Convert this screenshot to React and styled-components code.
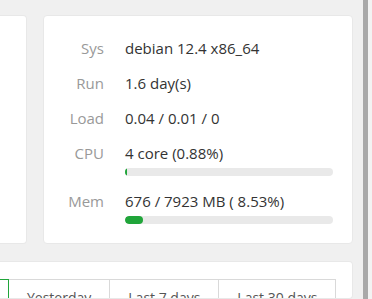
import React from "react";
import styled, { createGlobalStyle } from "styled-components";

const GlobalStyle = createGlobalStyle`
  html, body {
    margin: 0;
    padding: 0;
    background: #f0f0f0;
    overflow: hidden;
  }
  body {
    font-family: "Open Sans", "Noto Sans", sans-serif;
    color: #333;
  }
`;

const Screen = styled.div`
  display: flex;
  width: 372px;
  height: 299px;
  overflow: hidden;
`;

const Main = styled.main`
  flex: 0 0 363px;
  box-sizing: border-box;
  padding: 15px 10px 0 0;
  display: flex;
  flex-direction: column;
  gap: 17px;
`;

const Scrollbar = styled.div`
  flex: 0 0 9px;
  display: flex;
  background: #f3f3f3;
`;

const Thumb = styled.div`
  width: 5px;
  height: 100%;
  background: #a9a9a9;
`;

const Row = styled.div`
  display: flex;
  gap: 16px;
`;

const Card = styled.section`
  box-sizing: border-box;
  background: #fff;
  border: 1px solid #e8e8e8;
  border-radius: 4px;
`;

const SideCard = styled(Card)`
  width: 27px;
  height: 229px;
  border-left: none;
  border-radius: 0 4px 4px 0;
`;

const InfoCard = styled(Card)`
  width: 310px;
  height: 229px;
  padding: 22px 19px 0 0;
  display: flex;
  flex-direction: column;
  gap: 15px;
`;

const InfoRow = styled.div`
  display: grid;
  grid-template-columns: 60px 1fr;
  column-gap: 21px;
  font-size: 15px;
  line-height: 20px;
`;

const Label = styled.span`
  text-align: right;
  color: #999;
`;

const Value = styled.div`
  display: flex;
  flex-direction: column;
  gap: 5px;
  color: #333;
`;

const Track = styled.div`
  height: 8px;
  border-radius: 4px;
  background: #e9e9e9;
  overflow: hidden;
`;

const Fill = styled.div`
  height: 100%;
  border-radius: 4px;
  background: #20a53a;
`;

const ChartCard = styled(Card)`
  width: 353px;
  height: 80px;
  border-left: none;
  border-radius: 0 4px 4px 0;
  padding-top: 17px;
  overflow: hidden;
`;

const Tabs = styled.div`
  display: flex;
`;

const Tab = styled.button`
  flex: 0 0 auto;
  display: flex;
  justify-content: flex-end;
  box-sizing: border-box;
  height: 36px;
  padding: 8px 18px;
  margin-left: -1px;
  background: #fff;
  border: 1px solid ${(p) => (p.$active ? "#20a53a" : "#d9d9d9")};
  position: relative;
  z-index: ${(p) => (p.$active ? 1 : 0)};
  font-family: "Open Sans", "Noto Sans", sans-serif;
  font-size: 14px;
  line-height: 20px;
  color: #555;
  white-space: nowrap;
  overflow: hidden;
  cursor: pointer;
`;

/* first tab is scrolled out of view on the left; only its right edge shows */
const CutTab = styled(Tab)`
  width: 9px;
  padding: 8px 0;
  border-left: none;
  margin-left: 0;

  span {
    flex-shrink: 0;
    margin-right: 18px;
  }
`;

const info = [
  { label: "Sys", value: "debian 12.4 x86_64" },
  { label: "Run", value: "1.6 day(s)" },
  { label: "Load", value: "0.04 / 0.01 / 0" },
  { label: "CPU", value: "4 core (0.88%)", pct: 0.88 },
  { label: "Mem", value: "676 / 7923 MB ( 8.53%)", pct: 8.53 },
];

export default function App() {
  return (
    <>
      <GlobalStyle />
      <Screen>
        <Main>
          <Row>
            <SideCard />
            <InfoCard>
              {info.map((item) => (
                <InfoRow key={item.label}>
                  <Label>{item.label}</Label>
                  <Value>
                    <span>{item.value}</span>
                    {item.pct !== undefined && (
                      <Track>
                        <Fill style={{ width: `${Math.max(item.pct, 1)}%` }} />
                      </Track>
                    )}
                  </Value>
                </InfoRow>
              ))}
            </InfoCard>
          </Row>
          <ChartCard>
            <Tabs>
              <CutTab $active>
                <span>Today</span>
              </CutTab>
              <Tab>Yesterday</Tab>
              <Tab>Last 7 days</Tab>
              <Tab>Last 30 days</Tab>
            </Tabs>
          </ChartCard>
        </Main>
        <Scrollbar>
          <Thumb />
        </Scrollbar>
      </Screen>
    </>
  );
}
